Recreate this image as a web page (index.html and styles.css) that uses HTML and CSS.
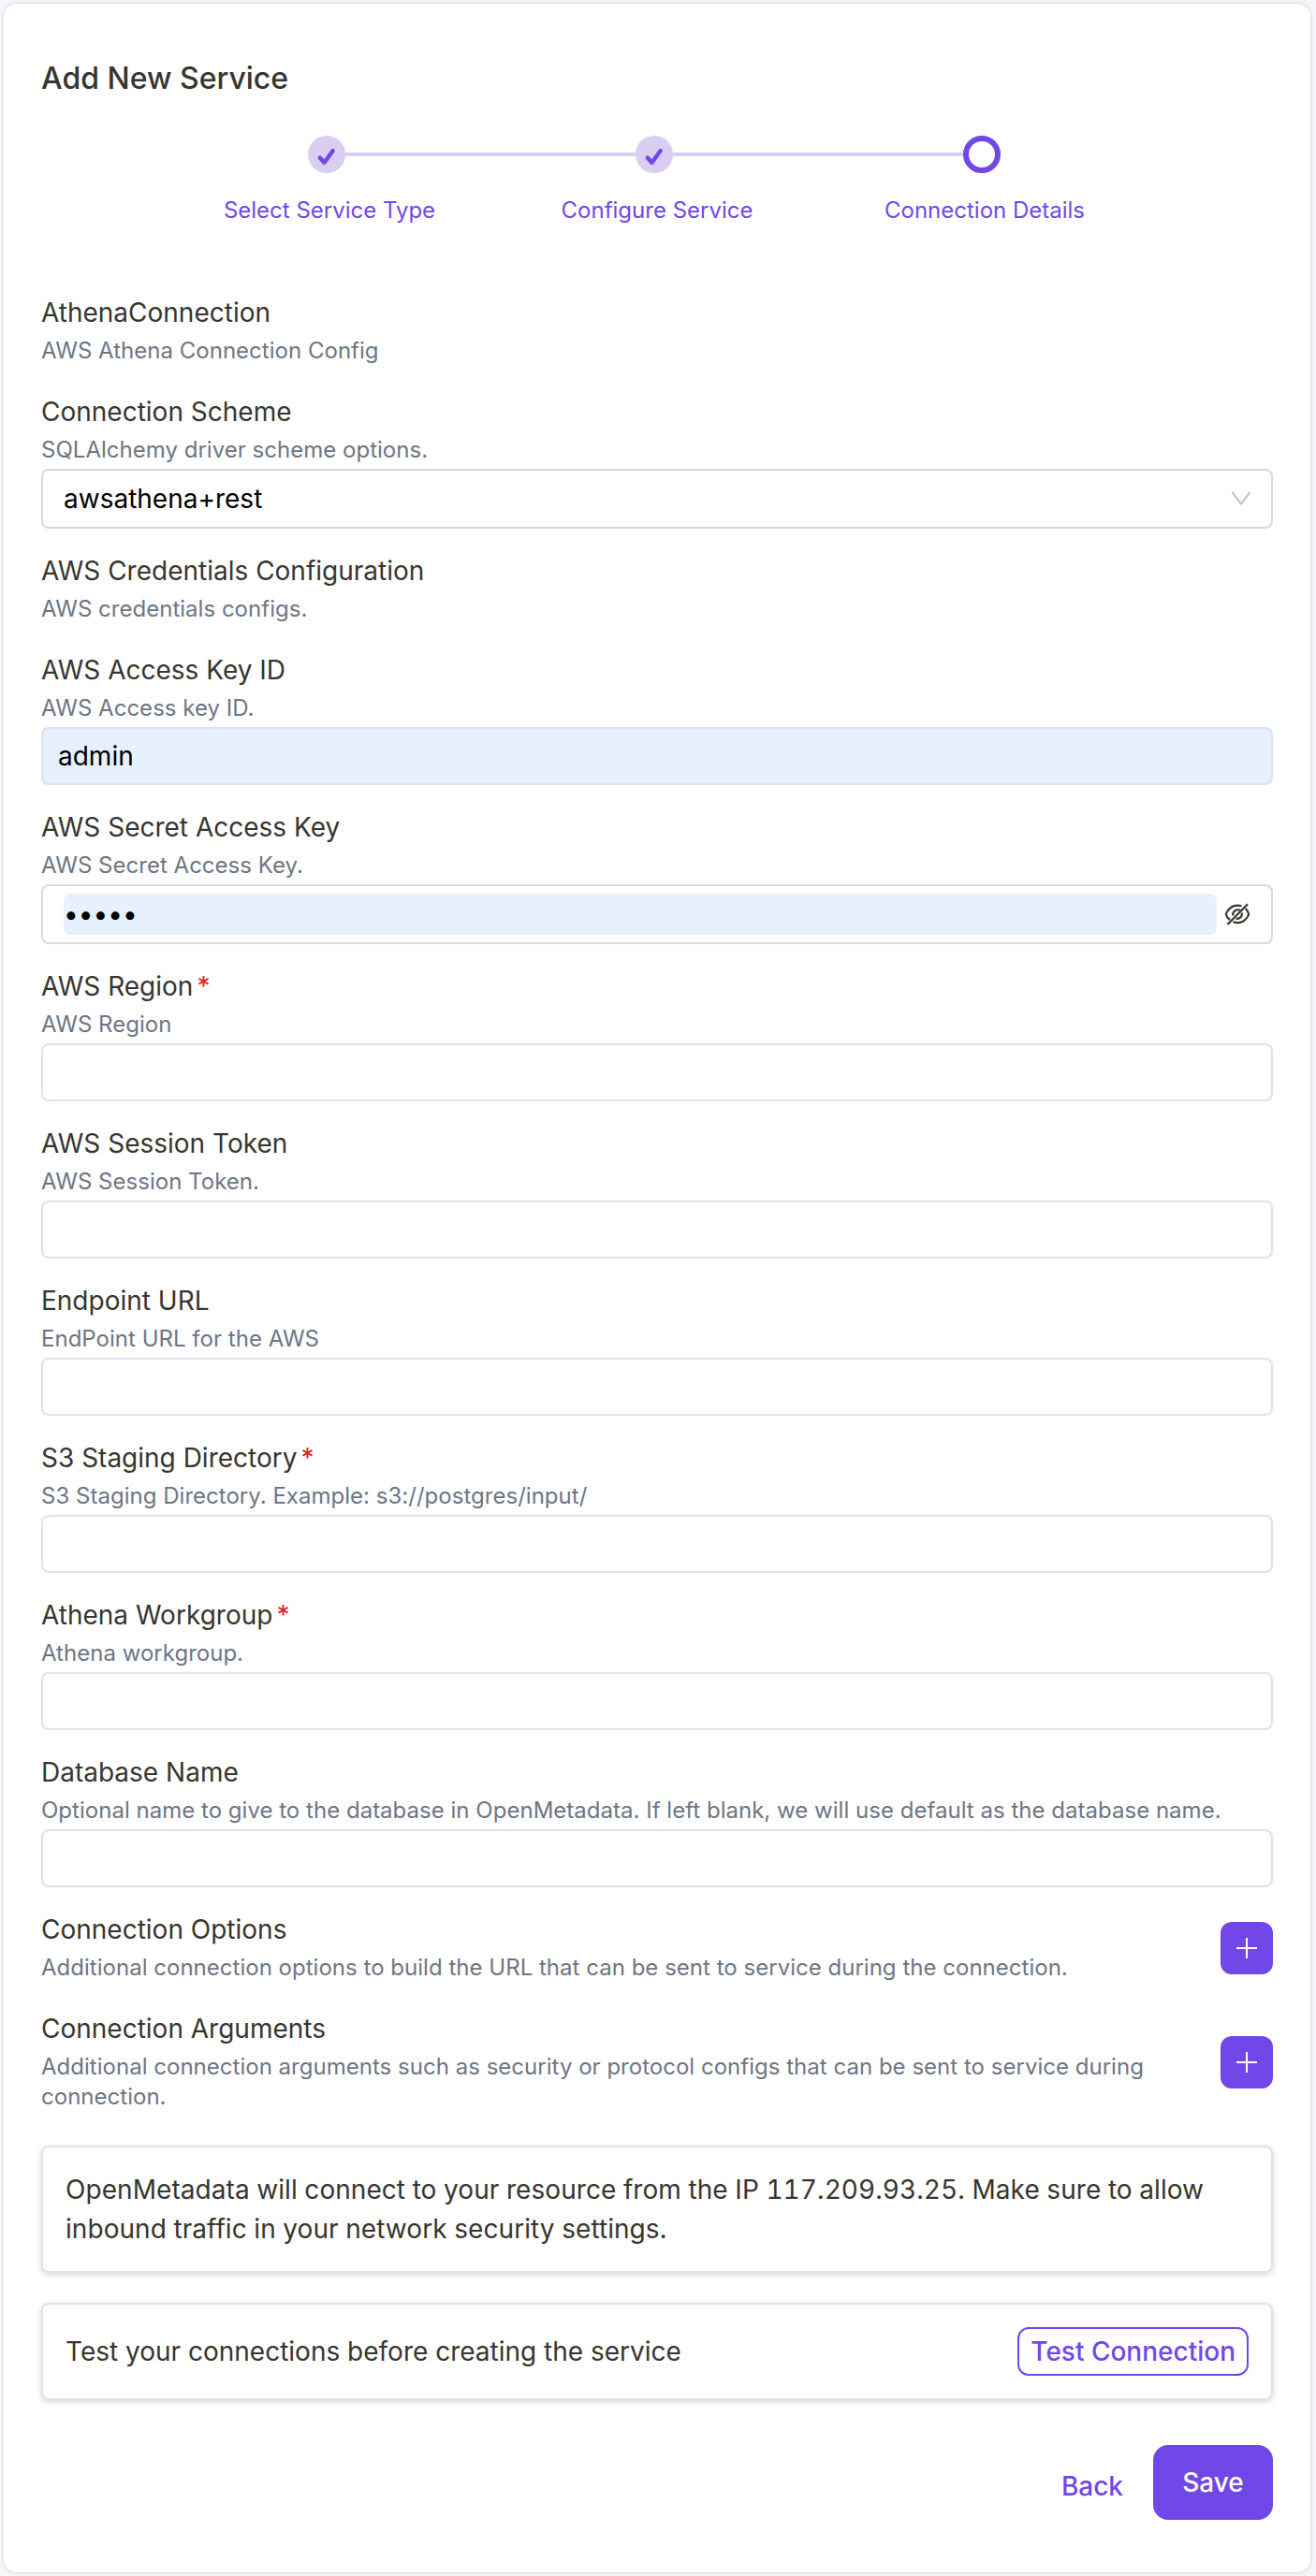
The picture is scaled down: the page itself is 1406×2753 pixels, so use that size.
FILE: index.html
```html
<!DOCTYPE html>
<html lang="en">
<head>
<meta charset="utf-8">
<title>Add New Service</title>
<link rel="stylesheet" href="styles.css">
</head>
<body>
<main class="card">
  <h1 class="title">Add New Service</h1>

  <ol class="steps">
    <li class="step">
      <span class="dot done"><svg viewBox="0 0 40 40"><path d="M12.700 23.500L17.500 28.700L26.700 16"/></svg></span>
      <span class="step-label">Select Service Type</span>
    </li>
    <li class="step">
      <span class="dot done"><svg viewBox="0 0 40 40"><path d="M12.700 23.500L17.500 28.700L26.700 16"/></svg></span>
      <span class="step-label">Configure Service</span>
    </li>
    <li class="step">
      <span class="dot current"></span>
      <span class="step-label">Connection Details</span>
    </li>
  </ol>

  <form class="form">
    <section class="field">
      <h2 class="label">AthenaConnection</h2>
      <p class="desc">AWS Athena Connection Config</p>
    </section>

    <div class="field">
      <label class="label">Connection Scheme</label>
      <p class="desc">SQLAlchemy driver scheme options.</p>
      <div class="select">
        <span>awsathena+rest</span>
        <svg class="chevron" viewBox="0 0 24 24"><path d="M2.500 5L12 17.500L21.500 5"/></svg>
      </div>
    </div>

    <section class="field">
      <h2 class="label">AWS Credentials Configuration</h2>
      <p class="desc">AWS credentials configs.</p>
    </section>

    <div class="field">
      <label class="label">AWS Access Key ID</label>
      <p class="desc">AWS Access key ID.</p>
      <input class="input filled" type="text" value="admin">
    </div>

    <div class="field">
      <label class="label">AWS Secret Access Key</label>
      <p class="desc">AWS Secret Access Key.</p>
      <div class="password">
        <input class="secret" type="password" value="admin">
        <svg class="eye" viewBox="0 0 28 28"><path d="M18.500 5.300C9 2.500 3.500 9 1.800 14C2.500 16.500 3.800 18.300 6 20.200M22.800 8C24.800 10 25.700 12 26.200 14C23.500 21.500 16.500 24.800 9.500 22.300"/><path d="M17 9.800C12.500 8 8.800 11 9.200 15.500M18.900 12.500C19.300 16.500 16.500 19.500 12.500 18.600"/><path d="M3.500 25L25 3.200"/></svg>
      </div>
    </div>

    <div class="field">
      <label class="label">AWS Region<span class="required">*</span></label>
      <p class="desc">AWS Region</p>
      <input class="input" type="text">
    </div>

    <div class="field">
      <label class="label">AWS Session Token</label>
      <p class="desc">AWS Session Token.</p>
      <input class="input" type="text">
    </div>

    <div class="field">
      <label class="label">Endpoint URL</label>
      <p class="desc">EndPoint URL for the AWS</p>
      <input class="input" type="text">
    </div>

    <div class="field">
      <label class="label">S3 Staging Directory<span class="required">*</span></label>
      <p class="desc">S3 Staging Directory. Example: s3://postgres/input/</p>
      <input class="input" type="text">
    </div>

    <div class="field">
      <label class="label">Athena Workgroup<span class="required">*</span></label>
      <p class="desc">Athena workgroup.</p>
      <input class="input" type="text">
    </div>

    <div class="field">
      <label class="label">Database Name</label>
      <p class="desc">Optional name to give to the database in OpenMetadata. If left blank, we will use default as the database name.</p>
      <input class="input" type="text">
    </div>

    <div class="field expandable">
      <div>
        <h2 class="label">Connection Options</h2>
        <p class="desc">Additional connection options to build the URL that can be sent to service during the connection.</p>
      </div>
      <button class="add" type="button" aria-label="Add option"><svg viewBox="0 0 24 24"><path d="M12 1V23M1 12H23"/></svg></button>
    </div>

    <div class="field expandable">
      <div>
        <h2 class="label">Connection Arguments</h2>
        <p class="desc">Additional connection arguments such as security or protocol configs that can be sent to service during connection.</p>
      </div>
      <button class="add" type="button" aria-label="Add argument"><svg viewBox="0 0 24 24"><path d="M12 1V23M1 12H23"/></svg></button>
    </div>
  </form>

  <div class="panel panel-ip">OpenMetadata will connect to your resource from the IP 117.209.93.25. Make sure to allow inbound traffic in your network security settings.</div>

  <div class="panel panel-row">
    <span>Test your connections before creating the service</span>
    <button class="test" type="button">Test Connection</button>
  </div>

  <footer class="actions">
    <button class="back" type="button">Back</button>
    <button class="save" type="button">Save</button>
  </footer>
</main>
</body>
</html>
```
FILE: styles.css
```css
* { box-sizing: border-box; margin: 0; padding: 0; }

body {
  background: #f4f5f8;
  padding: 2px 4px 2px 2px;
  color: #37352f;
  font-family: Inter, "Liberation Sans", sans-serif;
  font-size: 28px;
  line-height: 42px;
}

button, input { font: inherit; letter-spacing: inherit; color: inherit; }

.card {
  height: 2749px;
  background: #fff;
  border: 2px solid #e5e7eb;
  border-radius: 16px;
  padding: 56px 40px 0;
}

.title { font-size: 32px; font-weight: 500; line-height: 48px; }

.steps {
  display: grid;
  grid-template-columns: repeat(3, 350px);
  justify-content: center;
  margin-top: 37px;
  list-style: none;
}
.step { display: flex; flex-direction: column; align-items: center; position: relative; }
.step + .step::before {
  content: "";
  position: absolute;
  top: 18px;
  right: calc(50% + 23px);
  width: 310px;
  height: 4px;
  background: #d9cef1;
}
.dot { width: 40px; height: 40px; margin-right: 6px; border-radius: 50%; }
.dot.done { background: #d9cef1; }
.dot.current { border: 6px solid #7147e8; }
.dot svg { display: block; fill: none; stroke: #7147e8; stroke-width: 4.4; stroke-linecap: round; stroke-linejoin: round; }
.step-label { margin-top: 24px; color: #7147e8; font-size: 24px; line-height: 32px; }

.form { display: flex; flex-direction: column; gap: 24px; margin-top: 72px; }
.label { display: block; font-size: 28px; font-weight: 400; line-height: 42px; }
.desc { margin: 4px 0; color: #6d7585; font-size: 24px; line-height: 32px; letter-spacing: 0.02px; }
.required { margin-left: 4px; color: #e02424; }

.input {
  display: block;
  width: 100%;
  height: 62px;
  padding: 0 16px;
  border: 2px solid #dce3ec;
  border-radius: 8px;
  background: #fff;
  color: #000;
}
.input.filled { background: #e6f0fe; }

.select, .password {
  display: flex;
  align-items: center;
  justify-content: space-between;
  height: 64px;
  padding: 0 22px;
  border: 2px solid #d9d9d9;
  border-radius: 8px;
  color: #000;
}
.select { padding-right: 20px; }
.chevron { width: 24px; height: 24px; fill: none; stroke: #bfbfbf; stroke-width: 2; }
.secret {
  width: 1232px;
  height: 44px;
  border: 0;
  border-radius: 8px;
  background: #e6f0fe;
}
.eye { width: 28px; height: 28px; fill: none; stroke: #37352f; stroke-width: 2.2; }

.expandable { display: flex; align-items: center; justify-content: space-between; gap: 64px; }
.add {
  display: grid;
  place-items: center;
  flex: none;
  width: 56px;
  height: 56px;
  border: 0;
  border-radius: 12px;
  background: #7147e8;
}
.add svg { width: 24px; height: 24px; stroke: #fff; stroke-width: 2; }

.panel {
  margin-top: 32px;
  padding: 24px;
  border: 2px solid #dce3ec;
  border-radius: 8px;
  box-shadow: 0 2px 6px rgba(0, 0, 0, 0.16);
}
.panel-ip { font-variant-numeric: tabular-nums; letter-spacing: 0.06px; }
.panel-row { display: flex; align-items: center; justify-content: space-between; }
.test {
  height: 52px;
  padding: 0 12px;
  border: 2px solid #7147e8;
  border-radius: 12px;
  background: #fff;
  color: #7147e8;
  font-weight: 500;
}

.actions { display: flex; justify-content: flex-end; align-items: center; gap: 32px; margin-top: 48px; }
.back { padding-top: 8px; border: 0; background: none; color: #7147e8; font-weight: 500; }
.save { width: 128px; height: 80px; border: 0; border-radius: 16px; background: #7147e8; color: #fff; font-weight: 500; }
```
